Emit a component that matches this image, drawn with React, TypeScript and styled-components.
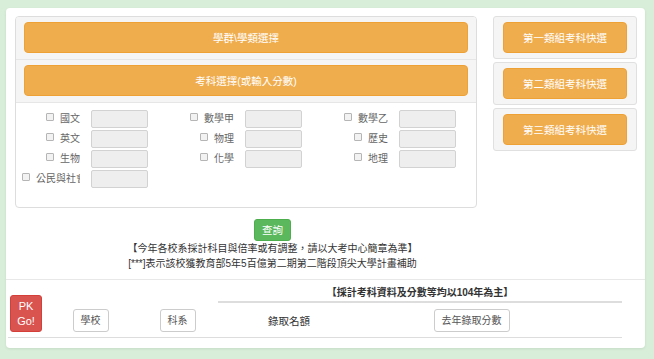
import React from 'react'
import styled, { createGlobalStyle } from 'styled-components'

const GlobalStyle = createGlobalStyle`
  html, body {
    margin: 0;
    padding: 0;
    background: #d8eed8;
  }
  body {
    font-family: 'Liberation Sans', 'Noto Sans CJK TC', sans-serif;
    color: #333;
  }
`

const Page = styled.div`
  width: 654px;
  height: 359px;
  box-sizing: border-box;
  padding: 8px 9px 0 6px;
`

const Card = styled.div`
  width: 639px;
  box-sizing: border-box;
  background: #fff;
  border-radius: 4px;
  box-shadow: 0 1px 3px rgba(0, 0, 0, 0.08);
  padding: 8px 0 10px;
`

const TopRow = styled.div`
  display: flex;
  align-items: flex-start;
  gap: 16px;
  padding: 0 8px 0 9px;
`

const Panel = styled.div`
  width: 462px;
  height: 192px;
  box-sizing: border-box;
  border: 1px solid #ddd;
  border-radius: 4px;
  overflow: hidden;
`

const PanelHeading = styled.div`
  background: #f5f5f5;
  padding: 5px 8px 6px;
  border-bottom: 1px solid #e6e6e6;
`

const OrangeButton = styled.div`
  height: 31px;
  box-sizing: border-box;
  background: #f0ad4e;
  border: 1px solid #eea236;
  border-radius: 4px;
  color: #fff;
  font-size: 10.5px;
  display: flex;
  align-items: center;
  justify-content: center;
  cursor: pointer;
`

const SubjectGrid = styled.div`
  display: grid;
  grid-template-columns: repeat(3, 154px);
  grid-auto-rows: 18px;
  row-gap: 2px;
  padding: 7px 0 0 6px;
`

const Field = styled.div`
  display: flex;
  align-items: center;
`

const FieldLabel = styled.label`
  width: 58px;
  margin-right: 11px;
  text-align: right;
  white-space: nowrap;
  overflow: hidden;
  font-size: 10px;
  line-height: 18px;
  color: #666;
`

const Check = styled.span`
  display: inline-block;
  width: 6px;
  height: 6px;
  margin-right: 6px;
  vertical-align: text-top;
  border: 1px solid #b5b5b5;
  border-radius: 1px;
  background: #f2f2f2;
`

const ScoreInput = styled.div`
  width: 57px;
  height: 18px;
  box-sizing: border-box;
  background: #eee;
  border: 1px solid #d2d2d2;
  border-radius: 2px;
`

const QuickColumn = styled.div`
  width: 144px;
  display: flex;
  flex-direction: column;
  gap: 3px;
`

const QuickBox = styled.div`
  background: #f5f5f5;
  border: 1px solid #e0e0e0;
  border-radius: 3px;
  padding: 5px 9px;
`

const Notes = styled.div`
  width: 515px;
  margin: 11px 0 0 9px;
  text-align: center;
`

const QueryButton = styled.span`
  display: inline-block;
  height: 22px;
  box-sizing: border-box;
  padding: 0 7px;
  line-height: 20px;
  background: #5cb85c;
  border: 1px solid #4cae4c;
  border-radius: 3px;
  color: #fff;
  font-size: 10.5px;
`

const NoteLine = styled.div`
  font-size: 10px;
  line-height: 15px;
  color: #333;
`

const Divider = styled.div`
  margin-top: 8px;
  border-top: 1px solid #e8e8e8;
`

const ResultGrid = styled.div`
  display: grid;
  width: 614px;
  margin-left: 2px;
  grid-template-columns: 36px 93px 81px 142px 223px 39px;
  grid-template-rows: 23px 34px;
  border-bottom: 1px solid #ddd;
`

const ResultTitle = styled.div`
  grid-column: 4 / 7;
  grid-row: 1;
  border-bottom: 2px solid #ddd;
  padding-top: 2px;
  display: flex;
  align-items: center;
  justify-content: center;
  font-size: 10px;
  font-weight: bold;
  color: #333;
`

const PkButton = styled.div`
  grid-column: 1;
  grid-row: 1 / 3;
  align-self: end;
  justify-self: center;
  margin-bottom: 5px;
  width: 32px;
  height: 37px;
  box-sizing: border-box;
  background: #d9534f;
  border: 1px solid #d43f3a;
  border-radius: 3px;
  color: #fff;
  font-size: 11px;
  line-height: 15px;
  display: flex;
  flex-direction: column;
  align-items: center;
  justify-content: center;
`

const Cell = styled.div<{ $col: number }>`
  grid-column: ${(p) => p.$col};
  grid-row: 2;
  display: flex;
  align-items: center;
  justify-content: center;
`

const SortButton = styled.span`
  height: 23px;
  box-sizing: border-box;
  padding: 0 7px;
  line-height: 21px;
  background: #fff;
  border: 1px solid #ccc;
  border-radius: 3px;
  font-size: 10px;
  color: #555;
`

const ColumnName = styled.span`
  font-size: 10.5px;
  color: #333;
`

const subjects = ['國文', '數學甲', '數學乙', '英文', '物理', '歷史', '生物', '化學', '地理', '公民與社會']
const quickPicks = ['第一類組考科快選', '第二類組考科快選', '第三類組考科快選']

export default function App() {
  return (
    <Page>
      <GlobalStyle />
      <Card>
        <TopRow>
          <Panel>
            <PanelHeading>
              <OrangeButton>學群\學類選擇</OrangeButton>
            </PanelHeading>
            <PanelHeading>
              <OrangeButton>考科選擇(或輸入分數)</OrangeButton>
            </PanelHeading>
            <SubjectGrid>
              {subjects.map((name) => (
                <Field key={name}>
                  <FieldLabel>
                    <Check />
                    {name}
                  </FieldLabel>
                  <ScoreInput />
                </Field>
              ))}
            </SubjectGrid>
          </Panel>
          <QuickColumn>
            {quickPicks.map((label) => (
              <QuickBox key={label}>
                <OrangeButton>{label}</OrangeButton>
              </QuickBox>
            ))}
          </QuickColumn>
        </TopRow>

        <Notes>
          <QueryButton>查詢</QueryButton>
          <NoteLine>【今年各校系採計科目與倍率或有調整，請以大考中心簡章為準】</NoteLine>
          <NoteLine>[***]表示該校獲教育部5年5百億第二期第二階段頂尖大學計畫補助</NoteLine>
        </Notes>

        <Divider />

        <ResultGrid>
          <PkButton>
            <span>PK</span>
            <span>Go!</span>
          </PkButton>
          <ResultTitle>【採計考科資料及分數等均以104年為主】</ResultTitle>
          <Cell $col={2}>
            <SortButton>學校</SortButton>
          </Cell>
          <Cell $col={3}>
            <SortButton>科系</SortButton>
          </Cell>
          <Cell $col={4}>
            <ColumnName>錄取名額</ColumnName>
          </Cell>
          <Cell $col={5}>
            <SortButton>去年錄取分數</SortButton>
          </Cell>
        </ResultGrid>
      </Card>
    </Page>
  )
}
